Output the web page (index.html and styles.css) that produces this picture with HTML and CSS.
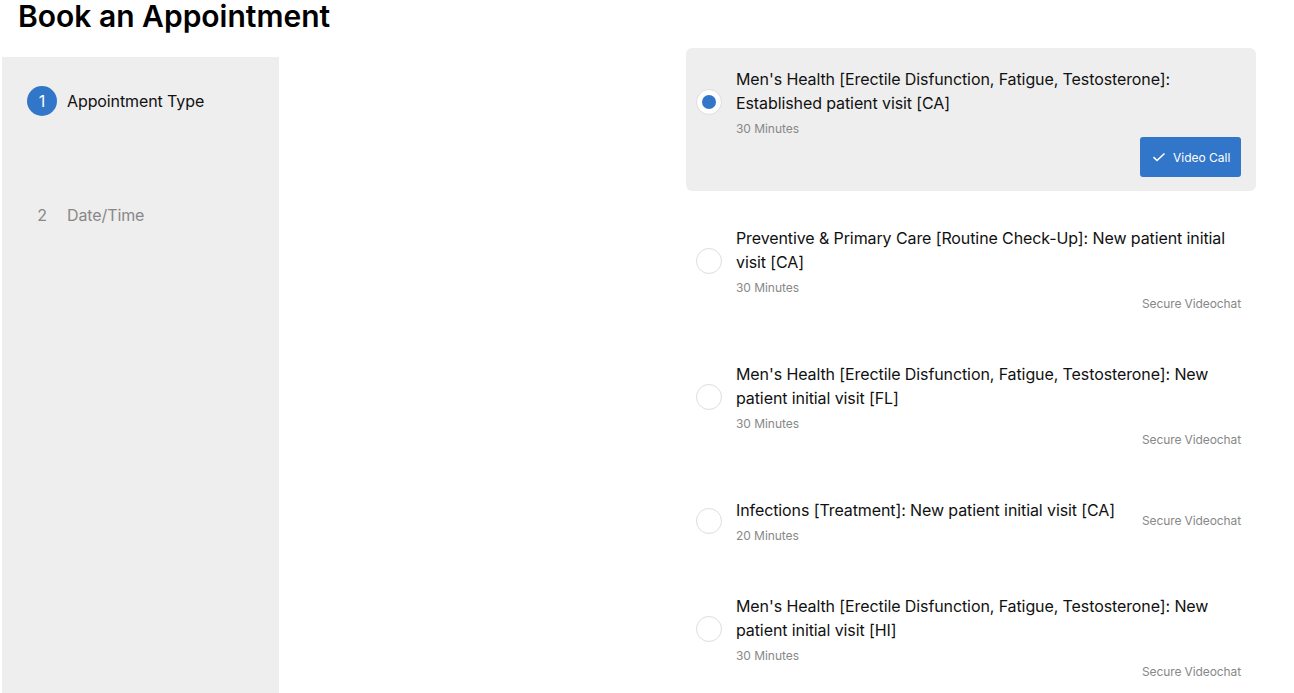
FILE: index.html
```html
<!DOCTYPE html>
<html>
<head>
<meta charset="utf-8">
<link rel="stylesheet" href="styles.css">
</head>
<body>
<div class="page">
  <div class="left">
    <h1 class="title">Book an Appointment</h1>
    <aside class="sidebar">
      <div class="step active"><span class="step-num">1</span><span class="step-label">Appointment Type</span></div>
      <div class="step"><span class="step-num">2</span><span class="step-label">Date/Time</span></div>
    </aside>
  </div>
  <main class="right">
    <div class="list">
      <div class="card selected">
        <div class="main">
          <span class="radio on"></span>
          <div class="info">
            <div class="name">Men's Health [Erectile Disfunction, Fatigue, Testosterone]: Established patient visit [CA]</div>
            <div class="dur">30 Minutes</div>
          </div>
        </div>
        <button class="btn"><svg width="14" height="10" viewBox="0 0 14 10"><path d="M1.5 5.2 L5 8.5 L12.5 1.5" fill="none" stroke="#fff" stroke-width="1.6"/></svg>Video Call</button>
      </div>
      <div class="card">
        <div class="main">
          <span class="radio"></span>
          <div class="info">
            <div class="name">Preventive &amp; Primary Care [Routine Check-Up]: New patient initial visit [CA]</div>
            <div class="dur">30 Minutes</div>
          </div>
        </div>
        <span class="tag">Secure Videochat</span>
      </div>
      <div class="card">
        <div class="main">
          <span class="radio"></span>
          <div class="info">
            <div class="name">Men's Health [Erectile Disfunction, Fatigue, Testosterone]: New patient initial visit [FL]</div>
            <div class="dur">30 Minutes</div>
          </div>
        </div>
        <span class="tag">Secure Videochat</span>
      </div>
      <div class="card">
        <div class="main">
          <span class="radio"></span>
          <div class="info">
            <div class="name">Infections [Treatment]: New patient initial visit [CA]</div>
            <div class="dur">20 Minutes</div>
          </div>
        </div>
        <span class="tag">Secure Videochat</span>
      </div>
      <div class="card">
        <div class="main">
          <span class="radio"></span>
          <div class="info">
            <div class="name">Men's Health [Erectile Disfunction, Fatigue, Testosterone]: New patient initial visit [HI]</div>
            <div class="dur">30 Minutes</div>
          </div>
        </div>
        <span class="tag">Secure Videochat</span>
      </div>
    </div>
  </main>
</div>
</body>
</html>
```
FILE: styles.css
```css
* { box-sizing: border-box; }
html, body { margin: 0; padding: 0; background: #fff; }
body {
  font-family: Inter, "Noto Sans", sans-serif;
  color: #111;
  overflow: hidden;
  height: 693px;
}
.page {
  display: flex;
  padding-left: 2px;
  height: 693px;
}
.left {
  width: 277px;
  display: flex;
  flex-direction: column;
  flex-shrink: 0;
}
.title {
  margin: 0;
  padding-left: 16px;
  font-size: 30px;
  font-weight: 600;
  line-height: 32px;
  height: 57px;
  white-space: nowrap;
  color: #000;
}
.sidebar {
  flex: 1;
  background: #eeeeee;
  padding: 29px 0 0 25px;
  display: flex;
  flex-direction: column;
  gap: 84px;
}
.step {
  display: flex;
  align-items: center;
  gap: 10px;
  height: 30px;
  color: #888;
  font-size: 16px;
  letter-spacing: -0.1px;
}
.step-num {
  width: 30px;
  height: 30px;
  border-radius: 50%;
  display: flex;
  align-items: center;
  justify-content: center;
  font-size: 16px;
}
.step.active { color: #111; }
.step.active .step-num { background: #3176c8; color: #fff; }
.right {
  flex: 1;
  display: flex;
  justify-content: flex-end;
  padding: 48px 38px 0 0;
}
.list {
  width: 570px;
  display: flex;
  flex-direction: column;
  gap: 16px;
}
.card {
  display: flex;
  flex-wrap: wrap;
  align-items: center;
  padding: 19px 15px 15px 10px;
  border-radius: 6px;
}
.card.selected { background: #eeeeee; padding-bottom: 14px; }
.main {
  display: flex;
  align-items: center;
  gap: 14px;
  flex: 0 1 auto;
}
.radio {
  width: 26px;
  height: 26px;
  border-radius: 50%;
  border: 1px solid #dedede;
  background: #fff;
  flex-shrink: 0;
  display: flex;
  align-items: center;
  justify-content: center;
}
.radio.on::after {
  content: "";
  width: 14px;
  height: 14px;
  border-radius: 50%;
  background: #3176c8;
}
.info { display: flex; flex-direction: column; }
.name { font-size: 16px; line-height: 24px; letter-spacing: -0.1px; }
.dur { font-size: 12px; line-height: 16px; color: #888; margin-top: 6px; letter-spacing: -0.05px; }
.tag {
  margin-left: auto;
  font-size: 12px;
  line-height: 16px;
  color: #888;
  letter-spacing: -0.1px;
}
.btn {
  margin-left: auto;
  height: 40px;
  width: 101px;
  border: none;
  border-radius: 3px;
  background: #3176c8;
  color: #fff;
  font-family: Inter, "Noto Sans", sans-serif;
  font-size: 12px;
  font-weight: 400;
  white-space: nowrap;
  display: flex;
  align-items: center;
  padding: 0 8px 0 12px;
  gap: 7px;
}
```
